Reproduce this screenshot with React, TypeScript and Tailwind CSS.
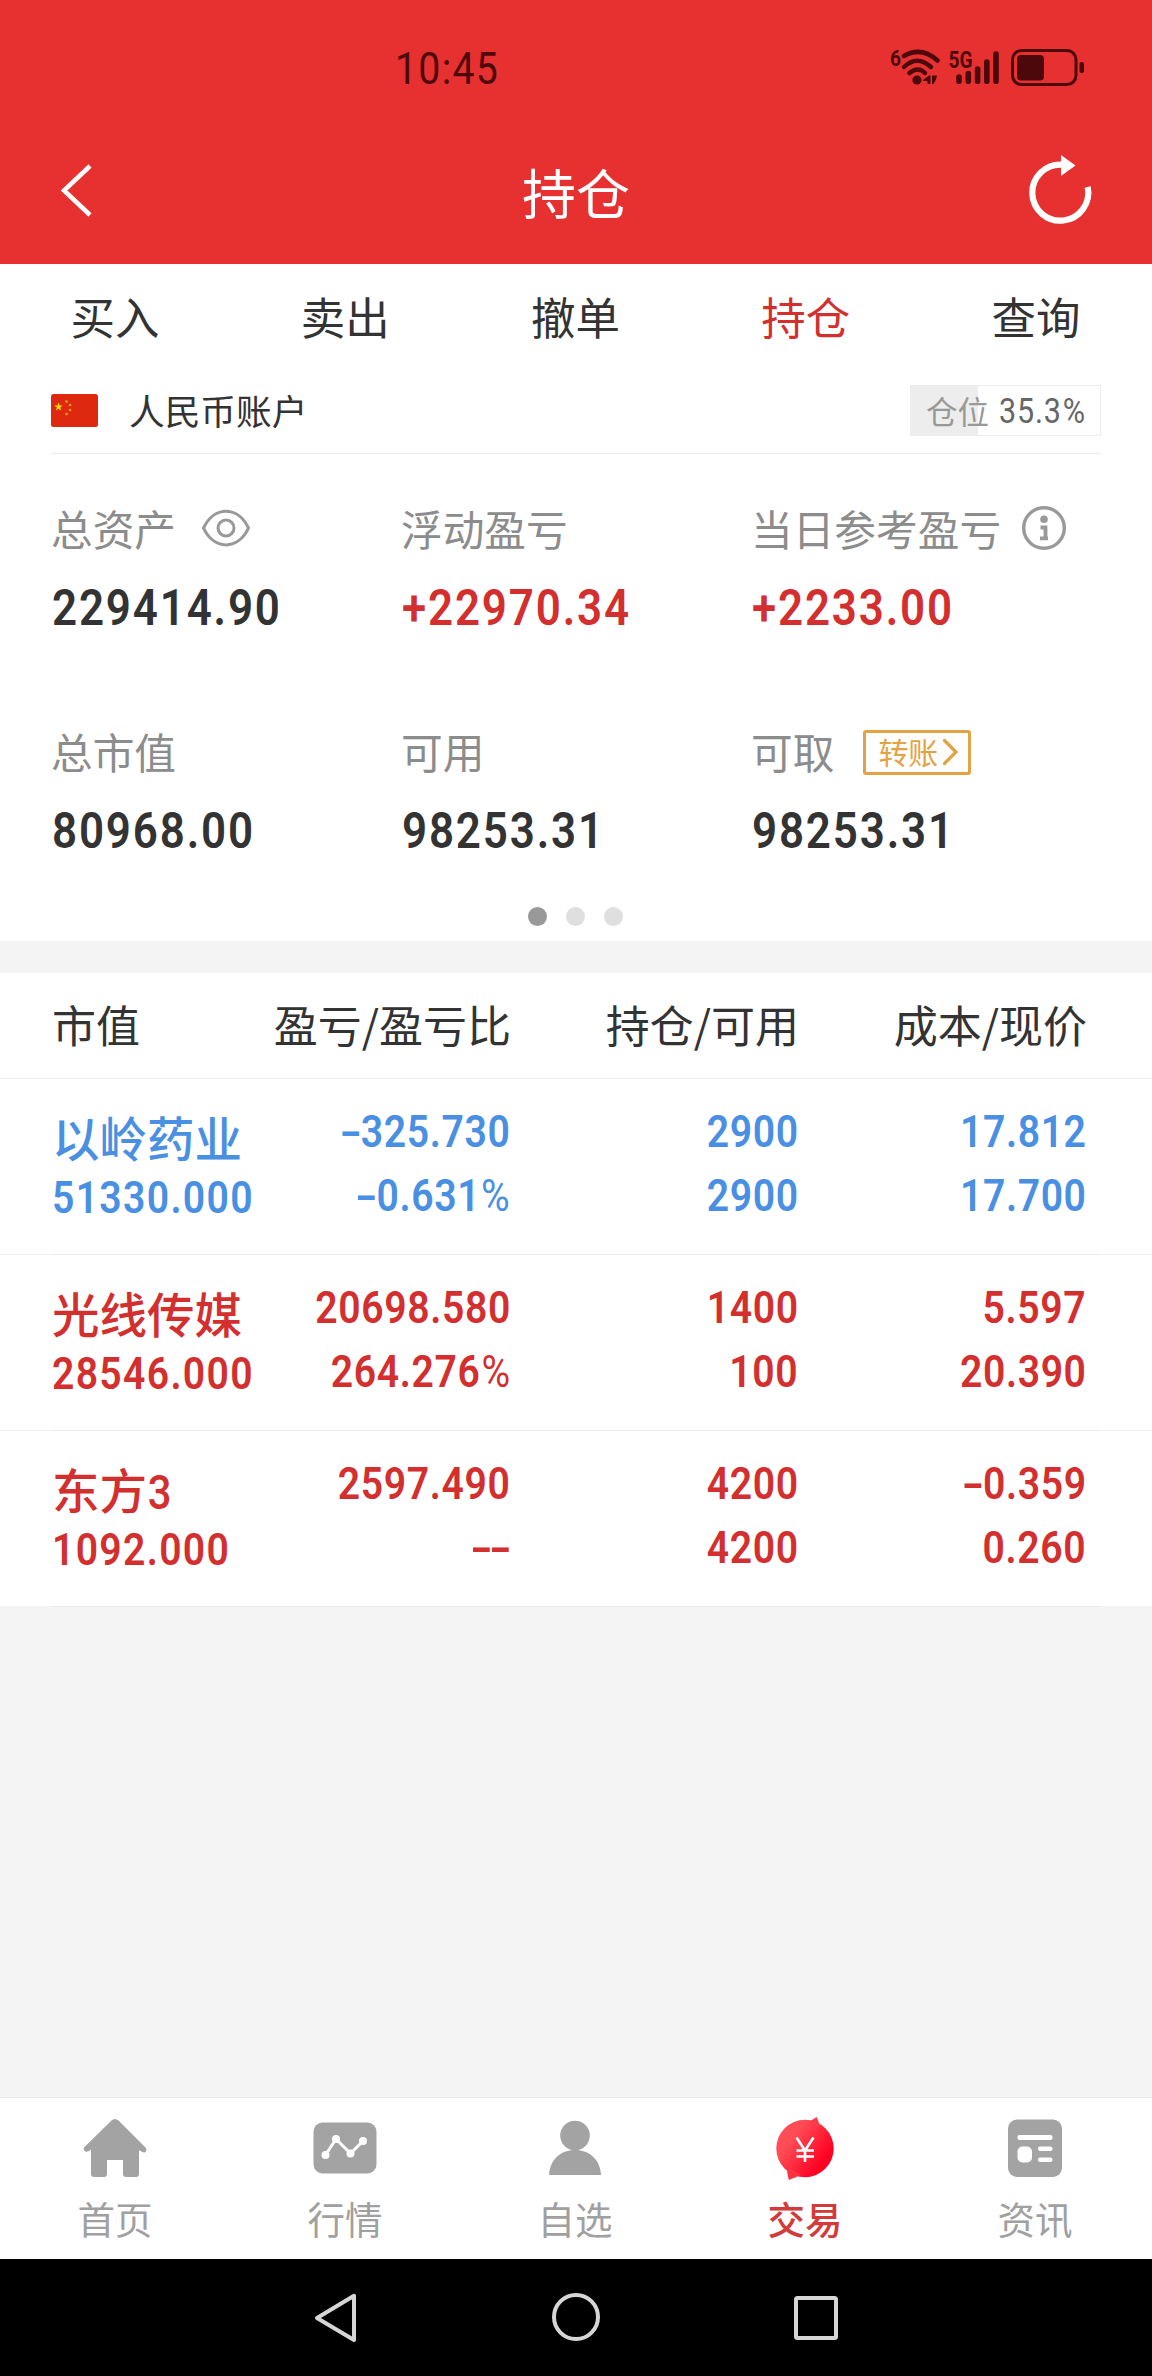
import React from 'react'

const CJK = 'font-["Noto_Sans_CJK_SC",sans-serif]'

type NumProps = { text: string; className: string; origin?: 'left' | 'right' }

// Condensed figures: the hyphen is drawn wider and the percent sign lighter than the digits.
function Num({ text, className, origin = 'left' }: NumProps) {
  return (
    <span
      className={`inline-block whitespace-nowrap font-["Roboto",sans-serif] scale-x-[0.87] ${
        origin === 'left' ? 'origin-left' : 'origin-right'
      } ${className}`}
    >
      {text.split('').map((c, i) =>
        c === '-' ? (
          <span key={i} className="inline-block w-[22.500px] text-center">
            <span className="inline-block scale-x-[1.6]">-</span>
          </span>
        ) : c === '%' ? (
          <span key={i} className="ml-[1px] font-normal">%</span>
        ) : (
          c
        ),
      )}
    </span>
  )
}

function StatusBar() {
  return (
    <div className="flex h-[120px] items-start justify-between pl-[395px] pr-[66px] pt-[47px] text-[#4d080b]">
      <Num text="10:45" className="text-[45px] leading-[43px] font-normal tracking-[1.5px]" />
      <svg width="196" height="42" viewBox="890 47 196 42" fill="none" stroke="currentColor">
        <text x="890" y="65.5" fontSize="22" fontWeight="700" fontFamily="Roboto" fill="currentColor" stroke="none" textLength="11" lengthAdjust="spacingAndGlyphs">6</text>
        <path d="M904 56Q921 46 937.500 60.500" strokeWidth="4.500" strokeLinecap="round" />
        <path d="M904 67Q917 54.500 931 67" strokeWidth="4.500" strokeLinecap="round" />
        <path d="M909.500 73Q918 66 925 73" strokeWidth="4.500" strokeLinecap="round" />
        <circle cx="917" cy="80" r="4.600" fill="currentColor" stroke="none" />
        <path d="M923 80L929 75.500H930.500V84H927.500V81H923ZM932 75.500H937L936 79.500L933.500 84H932Z" fill="currentColor" stroke="none" />
        <text x="948.500" y="67.500" fontSize="23" fontWeight="700" fontFamily="Roboto" fill="currentColor" stroke="none" textLength="24" lengthAdjust="spacingAndGlyphs">5G</text>
        <path d="M959 77V81.300M968.300 73.500V81.300M977.600 69V81.300M986.800 62V81.300M996 54V81.300" strokeWidth="5.600" strokeLinecap="round" />
        <rect x="1012.500" y="50.500" width="63.500" height="34" rx="9" strokeWidth="3" />
        <rect x="1017" y="55" width="27" height="25.500" rx="4" fill="currentColor" stroke="none" />
        <rect x="1079.500" y="62" width="4.500" height="11" rx="2" fill="currentColor" stroke="none" />
      </svg>
    </div>
  )
}

function TitleBar() {
  return (
    <div className="flex h-[144px] items-center justify-between pl-[58px] pr-[58px] text-white">
      <svg className="h-[60px] w-[67px] -mt-[5px]" viewBox="58 160 67 60" fill="none" stroke="white" strokeWidth="4.500">
        <path d="M90 166L64 190.500L90 215" />
      </svg>
      <h1 className="text-[54px] leading-[60px] -mt-[1px]">持仓</h1>
      <svg className="h-[76px] w-[67px] -mt-[6px]" viewBox="1027 151 67 76" fill="none" stroke="white">
        <path d="M1062 164.700A28 28 0 1 0 1087.700 187" strokeWidth="6.200" />
        <path d="M1061 155V176L1075.500 165.500Z" fill="white" stroke="none" />
      </svg>
    </div>
  )
}

const tabs = ['买入', '卖出', '撤单', '持仓', '查询']

function Flag() {
  return (
    <svg className="-mt-[2px]" width="47" height="33" viewBox="0 0 47 33">
      <rect width="47" height="33" rx="2.500" fill="#de2910" />
      <path d="M7.500 8.500l1.100 3 3.100.100-2.500 1.900.900 3.100-2.600-1.800-2.600 1.800.900-3.100-2.500-1.900 3.100-.100z" fill="#ffde00" />
      <g fill="#f5a51a">
        <circle cx="15.500" cy="7.500" r="1.300" />
        <circle cx="19" cy="11" r="1.300" />
        <circle cx="19" cy="16" r="1.300" />
        <circle cx="15.500" cy="20" r="1.300" />
      </g>
    </svg>
  )
}

function Account() {
  return (
    <div className="mx-[51px] flex h-[84px] items-center border-b border-[#ececec] pb-[1px]">
      <Flag />
      <span className="ml-[31px] -mt-[3px] text-[35.700px] leading-[40px] text-[#333]">人民币账户</span>
      <div className="relative ml-auto -mt-[2px] flex h-[51px] w-[191px] items-center border border-[#ececec]">
        <div className="absolute inset-y-0 left-0 w-[35.300%] bg-[#ededed]" />
        <span className="relative ml-[15px] -mt-[1px] text-[31.500px] leading-[40px] text-[#999]">仓位</span>
        <Num text="35.3%" className="relative ml-[10px] mt-[3px] text-[35px] leading-[40px] text-[#666] tracking-[1px]" />
      </div>
    </div>
  )
}

const NUM_BIG = 'text-[50.500px] leading-[56px] font-semibold tracking-[2.100px]'

type CellProps = { label: string; value: string; red?: boolean; children?: React.ReactNode }

function Cell({ label, value, red, children }: CellProps) {
  return (
    <div className="h-[223px]">
      <div className="flex h-[56px] items-center text-[41.700px] leading-[56px] text-[#8c8c8c]">
        <span className="-mt-[1px]">{label}</span>
        {children}
      </div>
      <div className={`mt-[24px] flex pl-[1px] ${red ? 'text-[#d32f2f]' : 'text-[#333]'}`}>
        <Num text={value} className={NUM_BIG} />
      </div>
    </div>
  )
}

function Summary() {
  return (
    <div className="h-[487px] px-[51px] pt-[46px]">
      <div className="grid grid-cols-3">
        <Cell label="总资产" value="229414.90">
          <svg className="ml-[25px]" width="50" height="40" viewBox="0 0 50 40" fill="none" stroke="#999" strokeWidth="3">
            <path d="M2.500 20C13 -2.500 37 -2.500 47.500 20C37 42.500 13 42.500 2.500 20Z" strokeLinejoin="round" />
            <circle cx="25" cy="20" r="8" />
          </svg>
        </Cell>
        <Cell label="浮动盈亏" value="+22970.34" red />
        <Cell label="当日参考盈亏" value="+2233.00" red>
          <svg className="ml-[21px]" width="44" height="44" viewBox="0 0 44 44" fill="none">
            <circle cx="22" cy="22" r="20.300" stroke="#999" strokeWidth="3.400" />
            <circle cx="22" cy="13.300" r="3.800" fill="#999" />
            <path d="M18.500 21.500H23.500V32M18 32.300H26" stroke="#999" strokeWidth="3.800" />
          </svg>
        </Cell>
        <Cell label="总市值" value="80968.00" />
        <Cell label="可用" value="98253.31" />
        <Cell label="可取" value="98253.31">
          <span className="ml-[29px] mt-[2px] flex h-[45px] w-[108px] items-center rounded-[3px] border-[3px] border-[#e3a343] pl-[12px] text-[#e3a343]">
            <span className="-mt-[2px] text-[30px] leading-[36px]">转账</span>
            <svg className="ml-[4px]" width="18" height="28" viewBox="0 0 18 28" fill="none" stroke="currentColor" strokeWidth="3.200">
              <path d="M2.500 2.500L14 14L2.500 25.500" strokeLinecap="round" />
            </svg>
          </span>
        </Cell>
      </div>
      <div className="-mt-[39px] flex justify-center gap-[19px] pr-[2px]">
        <i className="size-[19px] rounded-full bg-[#999]" />
        <i className="size-[19px] rounded-full bg-[#dfdfdf]" />
        <i className="size-[19px] rounded-full bg-[#dfdfdf]" />
      </div>
    </div>
  )
}

const holdings = [
  { name: '以岭药业', value: '51330.000', color: 'text-[#4a90e2]', cells: [['-325.730', '-0.631%'], ['2900', '2900'], ['17.812', '17.700']] },
  { name: '光线传媒', value: '28546.000', color: 'text-[#d32f2f]', cells: [['20698.580', '264.276%'], ['1400', '100'], ['5.597', '20.390']] },
  { name: '东方3', value: '1092.000', color: 'text-[#d32f2f]', cells: [['2597.490', '--'], ['4200', '4200'], ['-0.359', '0.260']] },
]

const COLS = 'grid grid-cols-[230px_229px_288px_288px] pl-[52px]'

function Holdings() {
  return (
    <div className="mt-[32px] bg-white">
      <div className={`${COLS} h-[106px] items-center border-b border-[#ececec] pb-[3px] text-[44px] leading-[60px] text-[#333]`}>
        <span>市值</span>
        <span className="justify-self-end whitespace-nowrap">盈亏/盈亏比</span>
        <span className="justify-self-end">持仓/可用</span>
        <span className="justify-self-end">成本/现价</span>
      </div>
      {holdings.map((h) => (
        <div key={h.name} className={`${h.color} h-[176px]`}>
          <div className={`${COLS} h-[175px] pt-[21px]`}>
            <div className="font-medium">
              <div className="h-[68px] text-[47.500px] leading-[74px]">
                {h.name.replace('3', '')}
                {h.name.includes('3') && <Num text="3" className="pl-[1px] text-[48px] leading-[60px] font-medium" />}
              </div>
              <div className="flex h-[60px] items-center">
                <Num text={h.value} className="text-[45px] leading-[60px] font-semibold tracking-[1.500px]" />
              </div>
            </div>
            {h.cells.map(([a, b], i) => (
              <div key={i} className="flex flex-col items-end pr-[0.500px]">
                <Num text={a} origin="right" className="text-[45px] leading-[64px] font-semibold tracking-[0.700px]" />
                <Num text={b} origin="right" className="text-[45px] leading-[64px] font-semibold tracking-[0.700px]" />
              </div>
            ))}
          </div>
          <div className="h-px bg-[#f3f3f3] px-[51px]">
            <div className="h-px bg-[#eaeaea]" />
          </div>
        </div>
      ))}
    </div>
  )
}

const navItems = [
  {
    label: '首页',
    icon: <path d="M28.500 5.600Q32 2.600 35.500 5.600L62 32Q64.500 35 62.500 37Q60.500 38.500 57 35.500H56V59Q56 62 53 62H43Q40 62 40 59V45H24V59Q24 62 21 62H11Q8 62 8 59V34.500Q4 38 1.500 36Q-.500 34 2 31.500Z" fill="#a3a3a3" />,
  },
  {
    label: '行情',
    icon: (
      <>
        <rect x="0.500" y="7.500" width="63" height="51" rx="9" fill="#a3a3a3" />
        <path d="M12.500 40L23 24L37.500 38.500L50 26" fill="none" stroke="white" strokeWidth="3" />
        <g fill="white"><circle cx="12.500" cy="40" r="4" /><circle cx="23" cy="24" r="4" /><circle cx="37.500" cy="38.500" r="4" /><circle cx="50" cy="26" r="4" /></g>
      </>
    ),
  },
  {
    label: '自选',
    icon: (
      <>
        <circle cx="32" cy="20.500" r="14.800" fill="#a3a3a3" />
        <path d="M6 60C7 44 18 35 32 35S57 44 58 60Z" fill="#a3a3a3" />
      </>
    ),
  },
  {
    label: '交易',
    active: true,
    icon: (
      <>
        <defs>
          <linearGradient id="tradeFill" x1="0.150" y1="0.200" x2="0.850" y2="0.700">
            <stop offset="0.200" stopColor="#ff4c55" />
            <stop offset="1" stopColor="#ff0022" />
          </linearGradient>
        </defs>
        <circle cx="32" cy="33.500" r="28.700" fill="url(#tradeFill)" />
        <path d="M36 7L43.500 2Q46 6 47 13Z" fill="#fb3d4b" />
        <path d="M28 60L16 65Q14 60 14 52Z" fill="#fd3341" />
        <path d="M23.500 22.500L32 35.500L40.500 22.500M32 35V47M23.500 35.500H41M23.500 41.500H41" fill="none" stroke="white" strokeWidth="2.600" />
      </>
    ),
  },
  {
    label: '资讯',
    icon: (
      <>
        <rect x="5" y="4.500" width="54" height="57.500" rx="9" fill="#a3a3a3" />
        <g fill="white">
          <rect x="14.500" y="20" width="35" height="5" rx="2" />
          <rect x="14.500" y="31.500" width="14.500" height="16" rx="5" />
          <rect x="35" y="31.500" width="14.500" height="4.500" rx="2" />
          <rect x="35" y="42.500" width="14.500" height="4.500" rx="2" />
        </g>
      </>
    ),
  },
]

function BottomNav() {
  return (
    <nav className="grid h-[162px] grid-cols-5 border-t border-[#e8e8e8] bg-white pt-[17px] pr-[2px]">
      {navItems.map((n) => (
        <div key={n.label} className="flex flex-col items-center">
          <svg width="64" height="68" viewBox="0 0 64 68">{n.icon}</svg>
          <span className={`mt-[10px] text-[37.500px] leading-[50px] ${n.active ? 'font-medium text-[#d33a3a]' : 'text-[#a0a0a0]'}`}>{n.label}</span>
        </div>
      ))}
    </nav>
  )
}

function SystemNav() {
  return (
    <div className="flex h-[117px] items-start justify-center gap-[176px] bg-black pt-[26px]">
      <svg width="64" height="64" viewBox="304 2285 64 64" fill="none" stroke="#d6d6d6" strokeWidth="4" strokeLinejoin="round">
        <path d="M317 2318L354 2295.800V2340Z" />
      </svg>
      <svg width="64" height="64" viewBox="544 2285 64 64" fill="none" stroke="#d6d6d6" strokeWidth="4">
        <circle cx="576" cy="2317" r="22" />
      </svg>
      <svg width="64" height="64" viewBox="784 2285 64 64" fill="none" stroke="#d6d6d6" strokeWidth="4">
        <rect x="796" y="2298" width="40" height="40" rx="1.500" />
      </svg>
    </div>
  )
}

export default function App() {
  return (
    <div className={`flex h-[2376px] w-[1152px] flex-col overflow-hidden bg-[#f4f4f4] ${CJK}`}>
      <header className="bg-[#e73030]">
        <StatusBar />
        <TitleBar />
      </header>
      <main className="flex flex-1 flex-col">
        <section className="bg-white">
          <div className="grid h-[106px] grid-cols-5 items-center pb-[3px] pr-[1px] text-center text-[44.500px] leading-[60px]">
            {tabs.map((t) => (
              <span key={t} className={t === '持仓' ? 'text-[#d32f2f]' : 'text-[#333]'}>{t}</span>
            ))}
          </div>
          <Account />
          <Summary />
        </section>
        <Holdings />
      </main>
      <BottomNav />
      <SystemNav />
    </div>
  )
}
